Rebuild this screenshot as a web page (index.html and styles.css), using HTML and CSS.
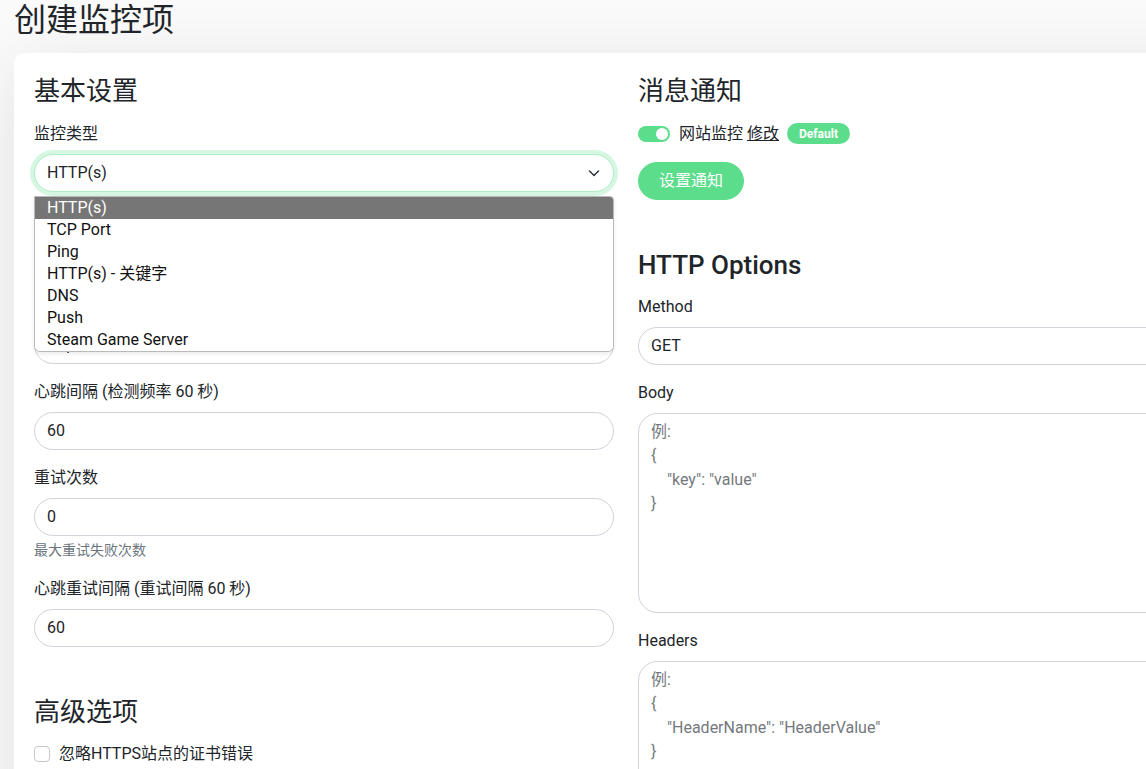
FILE: index.html
```html
<!DOCTYPE html>
<html lang="zh-CN">
<head>
<meta charset="utf-8">
<title>创建监控项</title>
<link rel="stylesheet" href="styles.css">
</head>
<body>
<div class="page">
  <h1 class="page-title">创建监控项</h1>
  <div class="card">
    <div class="col">
      <h2 class="sec-title">基本设置</h2>

      <div class="field">
        <label class="form-label">监控类型</label>
        <div class="select-wrap">
          <select class="form-select is-focus">
            <option>HTTP(s)</option>
          </select>
          <svg class="chev" width="16" height="16" viewBox="0 0 16 16"><path d="M3.5 6l4.5 4.5L12.5 6" fill="none" stroke="#343a40" stroke-width="1.6" stroke-linecap="round" stroke-linejoin="round"/></svg>
          <ul class="dropdown">
            <li class="dd-item active">HTTP(s)</li>
            <li class="dd-item">TCP Port</li>
            <li class="dd-item">Ping</li>
            <li class="dd-item">HTTP(s) - 关键字</li>
            <li class="dd-item">DNS</li>
            <li class="dd-item">Push</li>
            <li class="dd-item">Steam Game Server</li>
          </ul>
        </div>
      </div>

      <div class="field">
        <label class="form-label">友好名称</label>
        <input class="form-control" type="text" value="">
      </div>

      <div class="field">
        <label class="form-label">URL</label>
        <input class="form-control" type="text" value="https://">
      </div>

      <div class="field">
        <label class="form-label">心跳间隔 (检测频率 60 秒)</label>
        <input class="form-control" type="text" value="60">
      </div>

      <div class="field">
        <label class="form-label">重试次数</label>
        <input class="form-control" type="text" value="0">
        <div class="form-text">最大重试失败次数</div>
      </div>

      <div class="field">
        <label class="form-label">心跳重试间隔 (重试间隔 60 秒)</label>
        <input class="form-control" type="text" value="60">
      </div>

      <h2 class="sec-title spaced">高级选项</h2>
      <div class="field check-row">
        <span class="checkbox"></span>
        <span class="check-label">忽略HTTPS站点的证书错误</span>
      </div>
    </div>

    <div class="col">
      <h2 class="sec-title">消息通知</h2>
      <div class="notify-row">
        <span class="switch"><span class="knob"></span></span>
        <span class="notify-name">网站监控</span>
        <a class="edit-link" href="#">修改</a>
        <span class="badge">Default</span>
      </div>
      <div class="btn-row">
        <button class="btn-primary" type="button">设置通知</button>
      </div>

      <h2 class="sec-title spaced latin">HTTP Options</h2>

      <div class="field">
        <label class="form-label">Method</label>
        <div class="select-wrap">
          <select class="form-select">
            <option>GET</option>
          </select>
        </div>
      </div>

      <div class="field">
        <label class="form-label">Body</label>
        <textarea class="form-control textarea body-area" placeholder="例:&#10;{&#10;    &quot;key&quot;: &quot;value&quot;&#10;}"></textarea>
      </div>

      <div class="field">
        <label class="form-label">Headers</label>
        <textarea class="form-control textarea" placeholder="例:&#10;{&#10;    &quot;HeaderName&quot;: &quot;HeaderValue&quot;&#10;}"></textarea>
      </div>
    </div>
  </div>
</div>
</body>
</html>
```

FILE: styles.css
```css
* { box-sizing: border-box; }

html, body {
  margin: 0;
  padding: 0;
  overflow: hidden;
}

body {
  background: #fafafa;
  font-family: Roboto, "Noto Sans CJK SC", sans-serif;
  font-size: 16px;
  line-height: 1.5;
  color: #212529;
  width: 1146px;
  height: 769px;
}

.page {
  padding: 1px 0 0 14px;
}

.page-title {
  margin: 0 0 14px;
  font-size: 32px;
  font-weight: 400;
  line-height: 1.2;
}

.card {
  background: #fff;
  border-radius: 10px;
  box-shadow: 0 15px 70px rgba(0, 0, 0, 0.1);
  padding: 21px 20px 20px;
  display: grid;
  grid-template-columns: 580px 580px;
  column-gap: 24px;
  width: max-content;
}

.col {
  min-width: 0;
}

.sec-title {
  margin: 0 0 14px;
  padding-top: 2px;
  font-size: 26px;
  font-weight: 400;
  line-height: 1.2;
}

.sec-title.spaced {
  margin-top: 48px;
}

.sec-title.latin {
  font-weight: 500;
}

.field {
  margin-bottom: 16px;
}

.form-label {
  display: block;
  margin-bottom: 8px;
  line-height: 24px;
}

.form-control,
.form-select {
  display: block;
  width: 100%;
  height: 38px;
  padding: 6px 12px;
  font-family: inherit;
  font-size: 16px;
  line-height: 24px;
  color: #212529;
  background: #fff;
  border: 1px solid #ced4da;
  border-radius: 19.5px;
  outline: none;
  appearance: none;
  -webkit-appearance: none;
}

.form-select {
  padding-right: 36px;
}

.form-select.is-focus {
  border-color: #aeeec5;
  box-shadow: 0 0 0 4px rgba(92, 221, 139, 0.25);
}

.select-wrap {
  position: relative;
}

.chev {
  position: absolute;
  right: 12px;
  top: 11px;
}

.dropdown {
  position: absolute;
  left: 0;
  right: 0;
  top: calc(100% + 4px);
  margin: 0;
  padding: 0;
  list-style: none;
  background: #fff;
  border: 1px solid #b9b9b9;
  border-radius: 0 4px 6px 6px;
  box-shadow: 0 2px 4px rgba(0, 0, 0, 0.08);
  overflow: hidden;
  z-index: 5;
}

.dd-item {
  height: 22px;
  line-height: 22px;
  padding: 0 12px;
  color: #111;
  white-space: nowrap;
}

.dd-item.active {
  background: #767676;
  color: #fff;
}

.form-text {
  margin-top: 4px;
  font-size: 14px;
  line-height: 21px;
  color: #6c757d;
}

.check-row {
  display: flex;
  align-items: center;
  gap: 9px;
  height: 24px;
}

.checkbox {
  width: 16px;
  height: 16px;
  border: 1px solid #c4c8cc;
  border-radius: 4px;
  background: #fff;
  flex: none;
}

.notify-row {
  display: flex;
  align-items: center;
  height: 24px;
  margin-bottom: 16px;
}

.switch {
  position: relative;
  width: 32px;
  height: 16px;
  border-radius: 8px;
  background: #5cdd8b;
  margin-right: 9px;
  flex: none;
}

.knob {
  position: absolute;
  right: 2px;
  top: 2px;
  width: 12px;
  height: 12px;
  border-radius: 50%;
  background: #fff;
}

.notify-name {
  margin-right: 4px;
}

.edit-link {
  color: #212529;
  text-decoration: underline;
  margin-right: 8px;
}

.badge {
  display: inline-block;
  background: #5cdd8b;
  color: #fff;
  font-size: 12px;
  font-weight: 700;
  line-height: 1;
  padding: 4.5px 12px;
  border-radius: 11px;
}

.btn-row {
  display: flex;
}

.btn-primary {
  height: 38px;
  padding: 6px 20px;
  font-family: inherit;
  font-size: 16px;
  line-height: 24px;
  color: #fff;
  background: #5cdd8b;
  border: 1px solid #5cdd8b;
  border-radius: 19px;
}

.textarea {
  height: 200px;
  resize: none;
  border-radius: 19.5px;
  white-space: pre-wrap;
}

.textarea::placeholder {
  color: #75797d;
  opacity: 1;
}
```
